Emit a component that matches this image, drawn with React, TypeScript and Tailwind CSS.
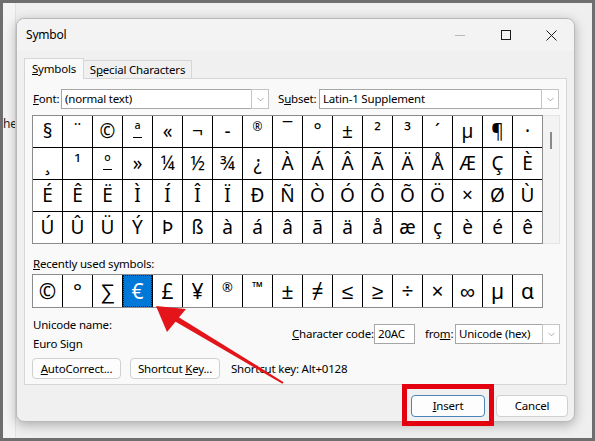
import { ChevronDown } from 'lucide-react'

const ROWS = [
  '§¨©ª«¬-®¯°±²³´µ¶·',
  '¸¹º»¼½¾¿ÀÁÂÃÄÅÆÇÈ',
  'ÉÊËÌÍÎÏÐÑÒÓÔÕÖ×ØÙ',
  'ÚÛÜÝÞßàáâãäåæçèéê',
]

const RECENT = ['©', '°', '∑', '€', '£', '¥', '®', '™', '±', '≠', '≤', '≥', '÷', '×', '∞', 'µ', 'α']

function Glyph({ ch }: { ch: string }) {
  // Segoe-style ordinals are underlined, the registered sign sits small and high
  if (ch === 'ª' || ch === 'º')
    return (
      <span className="flex flex-col items-center">
        <span className="text-[17px] leading-[9px]">{ch}</span>
        <span className="mt-[3px] h-[1.5px] w-[9px] bg-black" />
      </span>
    )
  if (ch === '®') return <span className="mb-[10px] text-[12px]">{ch}</span>
  return <>{ch}</>
}

function Select({ value, className }: { value: string; className: string }) {
  return (
    <div className={`flex h-[20px] border border-[#a6a6a6] bg-white ${className}`}>
      <span className="flex-1 truncate whitespace-nowrap pl-[3px] leading-[18px]">{value}</span>
      <span className="my-[-1px] mr-[-1px] flex w-[18px] items-center justify-center border border-[#c4c4c4] bg-white">
        <ChevronDown size={11} strokeWidth={1.2} className="text-[#707070]" />
      </span>
    </div>
  )
}

function Btn({ children, className }: { children: React.ReactNode; className: string }) {
  return (
    <div className={`flex h-[21px] items-center justify-center whitespace-nowrap rounded-[4px] border border-[#d0d0d0] bg-[#fdfdfd] ${className}`}>
      {children}
    </div>
  )
}

export default function App() {
  return (
    <div className="relative flex h-[441px] w-[595px] overflow-hidden whitespace-nowrap border-[3px] border-[#6e6e6e] bg-[#efefef] font-['Noto_Sans',sans-serif] text-[11.5px] tracking-[-0.2px] text-black">
      {/* document behind the dialog */}
      <div className="w-[13px] shrink-0 overflow-hidden border-r border-[#e2e2e2] bg-[#f4f4f4] pt-[112px]">
        <span className="text-[12px] text-[#222]">he</span>
      </div>

      <div className="pt-[15px]">
        {/* dialog */}
        <div className="flex h-[404px] w-[559px] flex-col rounded-[8px] border border-[#b9b9b9] bg-[#f0f0f0] shadow-[0_3px_12px_rgba(0,0,0,0.28)]">
          {/* title bar */}
          <div className="flex h-[32px] items-center rounded-t-[8px] bg-[#f3f3f3] pl-[9px]">
            <span className="flex-1 text-[12px]">Symbol</span>
            <div className="flex items-center">
              <span className="mr-[36px] h-px w-[10px] bg-[#b8b8b8]" />
              <span className="mr-[35px] h-[10px] w-[10px] border border-[#1a1a1a]" />
              <svg width="11" height="11" viewBox="0 0 11 11" className="mr-[17px]">
                <path d="M0.5 0.5 L10.5 10.5 M10.5 0.5 L0.5 10.5" stroke="#1a1a1a" strokeWidth="1" />
              </svg>
            </div>
          </div>

          {/* tabs */}
          <div className="mt-[7px] flex pl-[7px]">
            <div className="z-10 mb-[-1px] flex h-[21px] w-[60px] items-center justify-center border border-b-0 border-[#d6d6d6] bg-[#f9f9f9]">
              <span><u>S</u>ymbols</span>
            </div>
            <div className="mt-[2px] flex h-[18px] w-[108px] items-center justify-center border border-l-0 border-b-0 border-[#d6d6d6] bg-[#f0f0f0]">
              <span>S<u>p</u>ecial Characters</span>
            </div>
          </div>

          {/* tab panel */}
          <div className="mx-[7px] flex h-[307px] flex-col border border-[#d6d6d6] bg-[#f9f9f9] pl-[7px]">
            <div className="mt-[10px] flex items-center">
              <span className="w-[29px] pl-[1px]"><u>F</u>ont:</span>
              <Select value="(normal text)" className="w-[208px]" />
              <span className="ml-[9px] w-[41px]">S<u>u</u>bset:</span>
              <Select value="Latin-1 Supplement" className="w-[240px]" />
            </div>

            {/* symbol grid */}
            <div className="mt-[6px] flex">
              <div className="grid grid-cols-[repeat(17,29px)] grid-rows-[repeat(4,31px)] gap-px border border-[#8c8c8c] bg-black tracking-normal">
                {ROWS.map((row, r) =>
                  Array.from(row).map((ch, c) => (
                    <div key={`${r}-${c}`} className="flex items-center justify-center bg-white text-[19px] leading-none">
                      <Glyph ch={ch} />
                    </div>
                  ))
                )}
              </div>
              <div className="flex w-[17px] justify-center border-y border-r border-[#e4e4e4] bg-[#f3f3f3] pt-[16px]">
                <span className="h-[17px] w-[2px] bg-[#8a8a8a]" />
              </div>
            </div>

            <div className="mt-[11px] h-[17px] pl-[1px]"><u>R</u>ecently used symbols:</div>

            {/* recently used */}
            <div className="mt-[2px] grid w-max grid-cols-[repeat(17,29px)] grid-rows-[32px] gap-px border border-[#8c8c8c] bg-black tracking-normal">
              {RECENT.map((ch, i) =>
                ch === '€' ? (
                  <div key={i} className="flex items-center justify-center border border-dotted border-[#1b1b1b] bg-[#0078d7] text-[21px] leading-none text-white">
                    {ch}
                  </div>
                ) : (
                  <div key={i} className="flex items-center justify-center bg-white text-[21px] leading-none">
                    {ch === '®' ? <span className="mb-[8px] text-[13px]">®</span> : ch === '™' ? <span className="mb-[8px] text-[14px] font-bold">™</span> : ch}
                  </div>
                )
              )}
            </div>

            {/* info */}
            <div className="mt-[8px] flex">
              <div className="flex w-[260px] flex-col gap-[2px] pl-[1px]">
                <span className="leading-[17px]">Unicode name:</span>
                <span className="leading-[17px]">Euro Sign</span>
              </div>
              <div className="mt-[8px] flex h-[20px] items-center">
                <span className="w-[82px]"><u>C</u>haracter code:</span>
                <div className="flex h-[20px] w-[41px] items-center border border-[#a6a6a6] bg-white pl-[3px]">20AC</div>
                <span className="ml-[10px] w-[30px]">fro<u>m</u>:</span>
                <Select value="Unicode (hex)" className="w-[105px]" />
              </div>
            </div>

            <div className="mt-[6px] flex items-center">
              <Btn className="w-[89px]"><span><u>A</u>utoCorrect...</span></Btn>
              <Btn className="ml-[9px] w-[90px]"><span>Shortcut <u>K</u>ey...</span></Btn>
              <span className="ml-[11px]">Shortcut key: Alt+0128</span>
            </div>
          </div>

          {/* bottom buttons */}
          <div className="mt-[10px] flex justify-end pr-[6px]">
            <div className="relative">
              <div className="flex h-[22px] w-[74px] items-center justify-center rounded-[4px] border border-[#4a86b8] bg-[#fdfdfd]">
                <span><u>I</u>nsert</span>
              </div>
              <div className="absolute -bottom-[9px] -left-[9px] -right-[9px] -top-[11px] border-[5px] border-[#e3000f]" />
            </div>
            <div className="ml-[11px] flex h-[22px] w-[72px] items-center justify-center rounded-[4px] border border-[#d0d0d0] bg-[#fdfdfd]">
              Cancel
            </div>
          </div>
        </div>
      </div>

      {/* red annotation arrow */}
      <svg className="pointer-events-none absolute left-[-3px] top-[-3px]" width="595" height="441" viewBox="0 0 595 441">
        <polygon points="283.6,382.2 282.4,383.8 174.8,321.2 177.6,316.4" fill="#e3151b" />
        <polygon points="156,306 186,309 167,332" fill="#e3151b" />
      </svg>
    </div>
  )
}
